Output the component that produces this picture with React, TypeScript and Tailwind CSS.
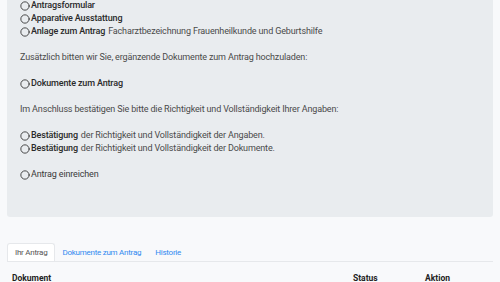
import { Circle } from "lucide-react";

function Item({ strong, rest, bold = true }: { strong: string; rest?: string; bold?: boolean }) {
  return (
    <div className="flex items-center h-[13px]">
      <Circle className="w-[10px] h-[10px] text-[#2a2a2a] shrink-0 mr-[1px]" strokeWidth={2} />
      <span className={bold ? "font-medium text-[#2a2a2a]" : "text-[#3a3a3a]"}>{strong}</span>
      {rest && <span className="ml-[3px] text-[#4a4a4a]">{rest}</span>}
    </div>
  );
}

export default function App() {
  return (
    <div
      className="w-[500px] h-[282px] overflow-hidden bg-[#f8f9fb] text-[9px] leading-[13px]"
      style={{ fontFamily: 'Roboto, "Liberation Sans", Arial, sans-serif' }}
    >
      <div className="mx-[7px] -mt-[6px] bg-[#e9ecef] rounded-[3px] pl-[13px] pt-[5px] h-[223px] text-[#4a4a4a] tracking-[-0.15px]">
        <Item strong="Antragsformular" />
        <Item strong="Apparative Ausstattung" />
        <Item strong="Anlage zum Antrag" rest="Facharztbezeichnung Frauenheilkunde und Geburtshilfe" />
        <p className="mt-[13px]">Zusätzlich bitten wir Sie, ergänzende Dokumente zum Antrag hochzuladen:</p>
        <div className="mt-[13px]">
          <Item strong="Dokumente zum Antrag" />
        </div>
        <p className="mt-[13px]">Im Anschluss bestätigen Sie bitte die Richtigkeit und Vollständigkeit Ihrer Angaben:</p>
        <div className="mt-[13px]">
          <Item strong="Bestätigung" rest="der Richtigkeit und Vollständigkeit der Angaben." />
          <Item strong="Bestätigung" rest="der Richtigkeit und Vollständigkeit der Dokumente." />
        </div>
        <div className="mt-[13px]">
          <Item strong="Antrag einreichen" bold={false} />
        </div>
      </div>

      <div className="mx-[7px] mt-[26px] flex border-b border-[#e6e8eb] text-[8px] tracking-[-0.25px]">
        <div className="bg-white border border-b-0 border-[#e6e8eb] rounded-t-[3px] px-[7px] h-[18px] flex items-center text-[#555]">
          Ihr Antrag
        </div>
        <div className="px-[7px] h-[18px] flex items-center text-[#3189f0]">Dokumente zum Antrag</div>
        <div className="px-[7px] h-[18px] flex items-center text-[#3189f0]">Historie</div>
      </div>

      <div className="mx-[7px] mt-[10px] flex text-[8.5px] leading-[12px] font-bold text-[#222]">
        <div className="pl-[5px] w-[346px]">Dokument</div>
        <div className="w-[72px]">Status</div>
        <div>Aktion</div>
      </div>
    </div>
  );
}
